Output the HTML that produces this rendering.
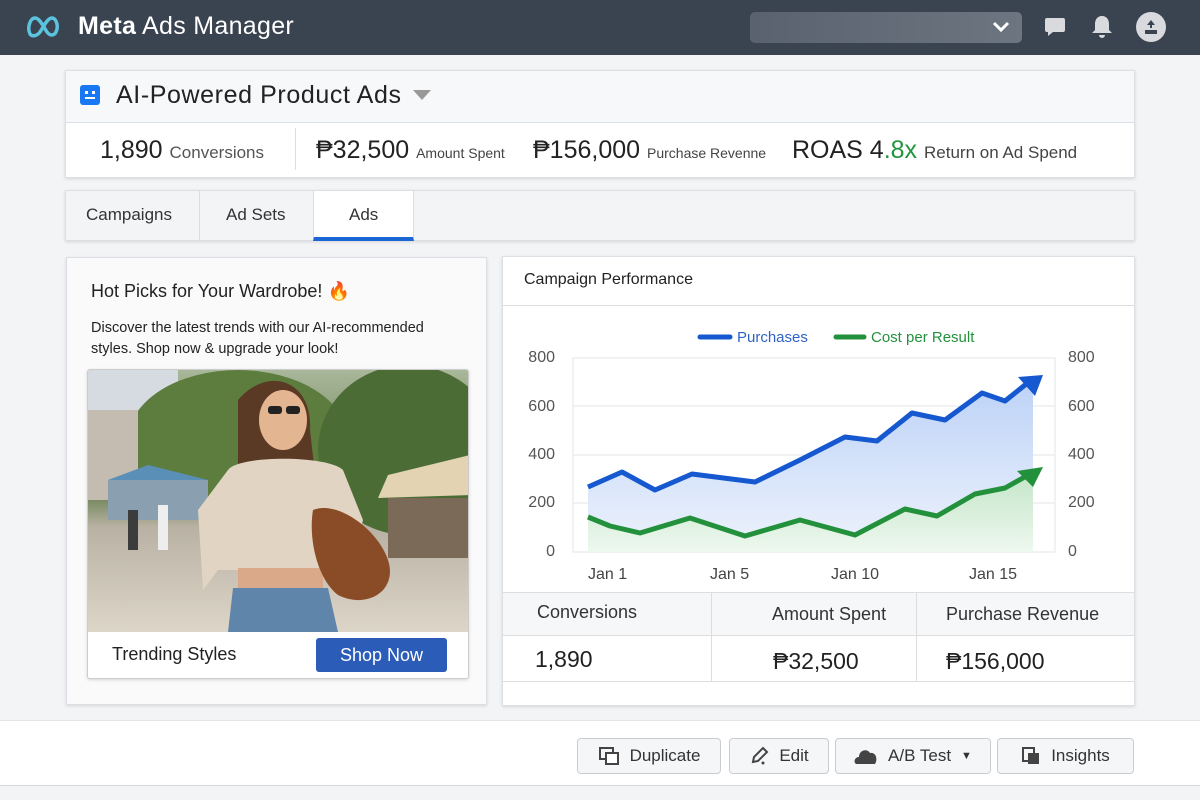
<!DOCTYPE html>
<html><head><meta charset="utf-8"><style>
*{box-sizing:border-box;margin:0;padding:0}
body{width:1200px;height:800px;overflow:hidden;background:#f3f4f6;font-family:"Liberation Sans","DejaVu Sans",sans-serif;color:#1c1e21;position:relative}
.a{position:absolute}
.card{position:absolute;background:#fff;border:1px solid #dcdfe3;box-shadow:0 1px 3px rgba(0,0,0,.12)}
.btn{position:absolute;top:738px;height:36px;border:1px solid #c9ccd1;border-radius:4px;background:#f5f6f7;font-size:17px;color:#333;display:flex;align-items:center;justify-content:center;gap:10px}
</style></head><body>
<!-- header -->
<div class="a" style="left:0;top:0;width:1200px;height:55px;background:#3a4350"></div>
<svg class="a" style="left:26px;top:14px" width="36" height="26" viewBox="0 0 36 26"><path d="M4 20 C1 14 4 4 9 4 C14 4 18 14 21 18 C24 22 28 22 30 18 C33 12 30 4 26 4 C21 4 17 14 14 18 C11 22 6 23 4 20Z" fill="none" stroke="#5bc3de" stroke-width="3.5"/></svg>
<div class="a" style="left:78px;top:12px;font-size:25px;color:#fff;letter-spacing:.3px"><b>Meta</b> Ads Manager</div>
<div class="a" style="left:750px;top:12px;width:272px;height:31px;border-radius:5px;background:linear-gradient(90deg,#59626e,#6c7580)"></div>
<svg class="a" style="left:991px;top:20px" width="20" height="14"><path d="M3 3 L10 10 L17 3" stroke="#fff" stroke-width="3" fill="none"/></svg>
<svg class="a" style="left:1043px;top:15px" width="24" height="24"><path d="M4 3h16a2 2 0 0 1 2 2v10a2 2 0 0 1-2 2H10l-5 4v-4H4a2 2 0 0 1-2-2V5a2 2 0 0 1 2-2z" fill="#d8dadd"/></svg>
<svg class="a" style="left:1090px;top:14px" width="24" height="26"><path d="M12 2c-5 0-7 4-7 8v6l-3 3h20l-3-3v-6c0-4-2-8-7-8z M9 21h6a3 3 0 0 1-6 0z" fill="#d8dadd"/></svg>
<svg class="a" style="left:1136px;top:12px" width="30" height="30"><circle cx="15" cy="15" r="15" fill="#d8dadd"/><path d="M15 8l-4 5h3v3h2v-3h3z M9 18h12v4H9z" fill="#3a4350"/></svg>

<!-- title card -->
<div class="card" style="left:65px;top:70px;width:1070px;height:108px;background:#f7f8f9"></div>
<div class="a" style="left:66px;top:122px;width:1068px;height:55px;background:#fff;border-top:1px solid #dcdfe3"></div>
<div class="a" style="left:80px;top:85px;width:20px;height:20px;border-radius:3px;background:#1877f2"></div>
<div class="a" style="left:85px;top:91px;width:3px;height:3px;background:#fff"></div><div class="a" style="left:92px;top:91px;width:3px;height:3px;background:#fff"></div><div class="a" style="left:85px;top:97px;width:10px;height:2px;background:#fff"></div>
<div class="a" style="left:116px;top:81px;font-size:25px;color:#222;letter-spacing:.6px">AI-Powered Product Ads</div>
<svg class="a" style="left:412px;top:89px" width="20" height="12"><path d="M1 1h18l-9 10z" fill="#999"/></svg>
<div class="a" style="left:100px;top:136px;font-size:25px;color:#222">1,890 <span style="font-size:17px;color:#555">Conversions</span></div>
<div class="a" style="left:295px;top:128px;width:1px;height:42px;background:#ddd"></div>
<div class="a" style="left:316px;top:136px;font-size:25px;color:#222">₱32,500 <span style="font-size:14px;color:#444">Amount Spent</span></div>
<div class="a" style="left:533px;top:136px;font-size:25px;color:#222">₱156,000 <span style="font-size:14px;color:#444">Purchase Revenne</span></div>
<div class="a" style="left:792px;top:136px;font-size:25px;color:#222">ROAS 4<b style="color:#22963e;font-weight:normal">.8x</b> <span style="font-size:17px;color:#444">Return on Ad Spend</span></div>

<!-- tabs -->
<div class="card" style="left:65px;top:190px;width:1070px;height:51px;background:#f3f4f6"></div>
<div class="a" style="left:199px;top:191px;width:1px;height:49px;background:#ddd"></div>
<div class="a" style="left:313px;top:191px;width:101px;height:50px;background:#fff;border-left:1px solid #ddd;border-right:1px solid #ddd;border-bottom:4px solid #1a66d4"></div>
<div class="a" style="left:86px;top:205px;font-size:17px;color:#333">Campaigns</div>
<div class="a" style="left:226px;top:205px;font-size:17px;color:#333">Ad Sets</div>
<div class="a" style="left:349px;top:205px;font-size:17px;color:#333">Ads</div>

<!-- ad card -->
<div class="card" style="left:66px;top:257px;width:421px;height:448px;background:#fafafa"></div>
<div class="a" style="left:91px;top:281px;font-size:18px;color:#222">Hot Picks for Your Wardrobe! <span style="color:#f3a221">🔥</span></div>
<div class="a" style="left:91px;top:318px;font-size:14.5px;line-height:21px;color:#222;width:355px">Discover the latest trends with our AI-recommended styles. Shop now &amp; upgrade your look!</div>
<div class="a" style="left:87px;top:369px;width:382px;height:310px;border:1px solid #ccc;border-radius:3px;background:#fff;overflow:hidden;box-shadow:0 1px 3px rgba(0,0,0,.15)">
 <svg width="382" height="262" viewBox="0 0 382 262">
  <defs><linearGradient id="bg" x1="0" y1="0" x2="0" y2="1"><stop offset="0" stop-color="#a9b79a"/><stop offset=".45" stop-color="#5e7a47"/><stop offset=".6" stop-color="#b9b2a4"/><stop offset="1" stop-color="#ddd6c8"/></linearGradient></defs>
  <rect width="382" height="262" fill="url(#bg)"/>
  <rect x="0" y="0" width="90" height="120" fill="#d5dbe0"/>
  <ellipse cx="150" cy="70" rx="110" ry="70" fill="#5d7d3e"/>
  <ellipse cx="320" cy="80" rx="90" ry="85" fill="#4b6d35"/>
  <rect x="0" y="40" width="50" height="90" fill="#c5bcb1"/>
  <path d="M20 110 L60 95 L120 110 Z" fill="#5a8fb8"/>
  <rect x="20" y="110" width="100" height="40" fill="#8aa0b0"/>
  <path d="M300 105 L382 85 L382 125 L290 128Z" fill="#e3d3b3"/>
  <rect x="300" y="128" width="82" height="60" fill="#7b6a58"/>
  <rect x="40" y="140" width="10" height="40" fill="#3c3c3c"/><rect x="70" y="135" width="10" height="45" fill="#eee"/>
  <path d="M150 30 C180 -5 225 10 222 60 L230 130 L175 140 L150 110Z" fill="#5a3a24"/>
  <ellipse cx="195" cy="50" rx="24" ry="30" fill="#e3b590"/>
  <rect x="180" y="36" width="14" height="8" rx="3" fill="#222"/><rect x="198" y="36" width="14" height="8" rx="3" fill="#222"/>
  <path d="M140 100 C150 85 240 85 255 100 L275 150 L262 200 L240 180 L240 200 L130 200 L115 220 L110 140Z" fill="#e2d4c3"/>
  <rect x="150" y="198" width="85" height="20" fill="#d9a98a"/>
  <path d="M145 218 L240 218 L250 262 L140 262Z" fill="#5f86aa"/>
  <path d="M225 140 C250 130 290 160 300 190 C310 220 280 240 250 225 C230 210 220 170 225 140Z" fill="#8a4c26"/>
 </svg>
 <div class="a" style="left:24px;top:274px;font-size:18px;color:#222">Trending Styles</div>
 <div class="a" style="left:228px;top:268px;width:131px;height:34px;background:#2b5cb8;border-radius:3px;color:#fff;font-size:18px;text-align:center;line-height:34px">Shop Now</div>
</div>

<!-- chart card -->
<div class="card" style="left:502px;top:256px;width:633px;height:450px"></div>
<div class="a" style="left:503px;top:305px;width:631px;height:1px;background:#ddd"></div>
<div class="a" style="left:524px;top:271px;font-size:16px;color:#222">Campaign Performance</div>
<svg class="a" style="left:503px;top:306px" width="631" height="285" viewBox="503 306 631 285" font-family="Liberation Sans, sans-serif">
 <defs>
  <linearGradient id="gb" x1="0" y1="0" x2="0" y2="1"><stop offset="0" stop-color="#bcd2f7"/><stop offset="1" stop-color="#eef3fc"/></linearGradient>
  <linearGradient id="gg" x1="0" y1="0" x2="0" y2="1"><stop offset="0" stop-color="#c4e6c8"/><stop offset="1" stop-color="#eef8ef"/></linearGradient>
 </defs>
 <rect x="573" y="358" width="482" height="194" fill="#fff" stroke="#e2e4e7"/>
 <g stroke="#e3e5e8"><line x1="573" y1="406" x2="1055" y2="406"/><line x1="573" y1="455" x2="1055" y2="455"/><line x1="573" y1="503" x2="1055" y2="503"/></g>
 <path d="M588 487 L622 472 L655 490 L692 474 L755 482 L800 460 L845 437 L877 441 L912 413 L945 420 L982 393 L1005 401 L1033 380 L1033 552 L588 552Z" fill="url(#gb)"/>
 <path d="M588 517 L610 526 L640 533 L690 518 L745 536 L800 520 L855 535 L905 509 L937 516 L975 494 L1005 488 L1033 474 L1033 552 L588 552Z" fill="url(#gg)"/>
 <polyline points="588,487 622,472 655,490 692,474 755,482 800,460 845,437 877,441 912,413 945,420 982,393 1005,401 1030,381" fill="none" stroke="#1558cf" stroke-width="5" stroke-linejoin="round"/>
 <path d="M1018 377 L1043 375 L1035 396Z" fill="#1558cf"/>
 <polyline points="588,517 610,526 640,533 690,518 745,536 800,520 855,535 905,509 937,516 975,494 1005,488 1030,474" fill="none" stroke="#23913c" stroke-width="5" stroke-linejoin="round"/>
 <path d="M1017 471 L1043 467 L1033 487Z" fill="#23913c"/>
 <line x1="700" y1="337" x2="730" y2="337" stroke="#1558cf" stroke-width="5" stroke-linecap="round"/>
 <text x="737" y="342" font-size="15" fill="#2f63c6">Purchases</text>
 <line x1="836" y1="337" x2="864" y2="337" stroke="#23913c" stroke-width="5" stroke-linecap="round"/>
 <text x="871" y="342" font-size="15" fill="#23913c">Cost per Result</text>
 <g font-size="16" fill="#555" text-anchor="end"><text x="555" y="362">800</text><text x="555" y="411">600</text><text x="555" y="459">400</text><text x="555" y="507">200</text><text x="555" y="556">0</text></g>
 <g font-size="16" fill="#555"><text x="1068" y="362">800</text><text x="1068" y="411">600</text><text x="1068" y="459">400</text><text x="1068" y="507">200</text><text x="1068" y="556">0</text></g>
 <g font-size="16" fill="#444"><text x="588" y="579">Jan 1</text><text x="710" y="579">Jan 5</text><text x="831" y="579">Jan 10</text><text x="969" y="579">Jan 15</text></g>
</svg>
<div class="a" style="left:503px;top:592px;width:631px;height:44px;background:#f6f7f8;border-top:1px solid #ddd;border-bottom:1px solid #ddd"></div>
<div class="a" style="left:711px;top:592px;width:1px;height:90px;background:#ddd"></div>
<div class="a" style="left:916px;top:592px;width:1px;height:90px;background:#ddd"></div>
<div class="a" style="left:503px;top:681px;width:631px;height:1px;background:#ddd"></div>
<div class="a" style="left:537px;top:602px;font-size:18px;color:#333">Conversions</div>
<div class="a" style="left:772px;top:604px;font-size:18px;color:#333">Amount Spent</div>
<div class="a" style="left:946px;top:604px;font-size:18px;color:#333">Purchase Revenue</div>
<div class="a" style="left:535px;top:646px;font-size:23px;color:#222">1,890</div>
<div class="a" style="left:773px;top:648px;font-size:23px;color:#222">₱32,500</div>
<div class="a" style="left:946px;top:648px;font-size:23px;color:#222">₱156,000</div>

<!-- footer -->
<div class="a" style="left:0;top:720px;width:1200px;height:66px;background:#fff;border-top:1px solid #e3e5e8;border-bottom:1px solid #d5d8dc"></div>
<div class="btn" style="left:577px;width:144px"><svg width="22" height="20"><rect x="2" y="2" width="13" height="11" fill="none" stroke="#444" stroke-width="2"/><rect x="8" y="7" width="12" height="11" fill="#fff" stroke="#444" stroke-width="2"/></svg>Duplicate</div>
<div class="btn" style="left:729px;width:100px"><svg width="20" height="20"><path d="M4 16 L5 11 L14 2 L18 6 L9 15 Z" fill="none" stroke="#444" stroke-width="2"/><circle cx="14" cy="17" r="1.5" fill="#444"/></svg>Edit</div>
<div class="btn" style="left:835px;width:156px"><svg width="24" height="18"><path d="M3 17 C-1 17 0 10 5 10 C5 3 13 1 16 6 C22 5 24 12 21 17Z" fill="#444"/></svg>A/B Test <span style="font-size:11px">▼</span></div>
<div class="btn" style="left:997px;width:137px"><svg width="20" height="20"><rect x="2" y="2" width="11" height="13" fill="none" stroke="#444" stroke-width="2"/><rect x="7" y="7" width="11" height="11" fill="#444"/></svg>Insights</div>
</body></html>
